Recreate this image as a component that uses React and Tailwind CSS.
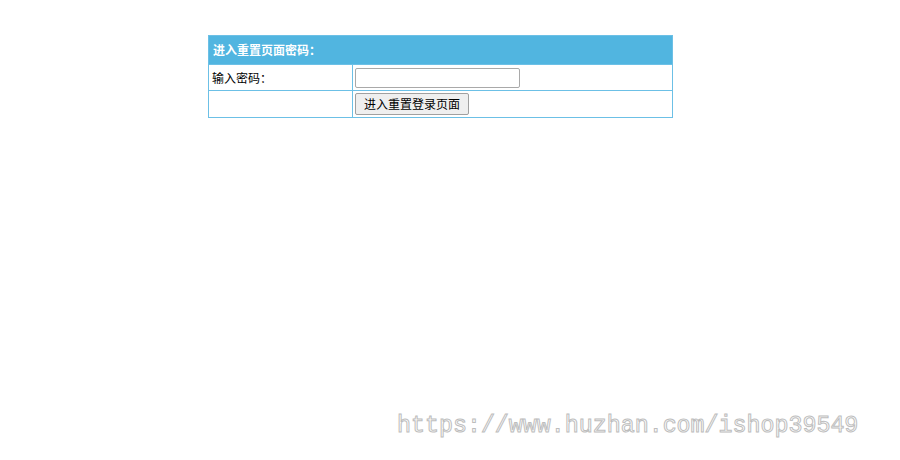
export default function App() {
  return (
    <div className="relative w-[900px] h-[460px] bg-white font-['Noto_Sans_CJK_SC',sans-serif] text-[12px] text-black">
      <div className="pt-[35px] pl-[208px]">
        <table className="w-[465px] border-collapse border border-[#6cc0e6]">
          <tbody>
            <tr className="h-[29px] bg-[#51b5e0]">
              <td colSpan={2} className="px-[4px] font-bold text-white">进入重置页面密码：</td>
            </tr>
            <tr className="h-[26px]">
              <td className="w-[144px] border border-[#6cc0e6] px-[3px]">输入密码：</td>
              <td className="border border-[#6cc0e6] px-[2px]">
                <input
                  type="password"
                  className="block w-[165px] h-[20px] border border-[#a9a9a9] rounded-[2px] bg-white"
                />
              </td>
            </tr>
            <tr className="h-[27px]">
              <td className="border border-[#6cc0e6]"></td>
              <td className="border border-[#6cc0e6] px-[2px]">
                <button className="block h-[22px] px-[8px] border border-[#a0a0a0] rounded-[2px] bg-[#efefef] text-[12px] leading-none">
                  进入重置登录页面
                </button>
              </td>
            </tr>
          </tbody>
        </table>
      </div>
      <div className="absolute left-[397px] top-[415px] font-['Liberation_Mono',monospace] text-[23.3px] leading-none text-white [-webkit-text-stroke:1px_#bdbdbd]">
        https://www.huzhan.com/ishop39549
      </div>
    </div>
  )
}
